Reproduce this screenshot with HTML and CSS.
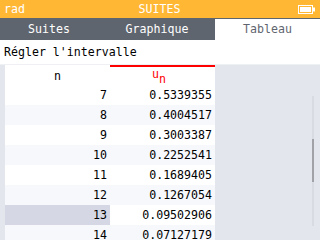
FILE: index.html
```html
<!DOCTYPE html>
<html lang="fr">
<head>
<meta charset="utf-8">
<link rel="stylesheet" href="styles.css">
</head>
<body>
<div class="screen">
  <header class="status">
    <span class="angle">rad</span>
    <span class="title">SUITES</span>
    <span class="battery">
      <svg width="17" height="9" viewBox="0 0 17 9">
        <rect x="0.5" y="0.5" width="14" height="8" fill="none" stroke="#fff" stroke-width="1"/>
        <rect x="2" y="2" width="11" height="5" fill="#fff"/>
        <rect x="15" y="2.5" width="2" height="4" fill="#fff"/>
      </svg>
    </span>
  </header>
  <nav class="tabs">
    <div class="tab">Suites</div>
    <div class="tab">Graphique</div>
    <div class="tab active">Tableau</div>
  </nav>
  <div class="action">Régler l'intervalle</div>
  <main class="content">
    <div class="table">
      <div class="cell head">n</div>
      <div class="cell head u">u<sub>n</sub></div>

      <div class="cell n">7</div><div class="cell v">0.5339355</div>
      <div class="cell n alt">8</div><div class="cell v alt">0.4004517</div>
      <div class="cell n">9</div><div class="cell v">0.3003387</div>
      <div class="cell n alt">10</div><div class="cell v alt">0.2252541</div>
      <div class="cell n">11</div><div class="cell v">0.1689405</div>
      <div class="cell n alt">12</div><div class="cell v alt">0.1267054</div>
      <div class="cell n sel">13</div><div class="cell v">0.09502906</div>
      <div class="cell n alt">14</div><div class="cell v alt">0.07127179</div>
    </div>
    <div class="side">
      <div class="track"><div class="thumb"></div></div>
    </div>
  </main>
</div>
</body>
</html>
```

FILE: styles.css
```css
* { box-sizing: border-box; }
html, body { margin: 0; padding: 0; }
body {
  width: 320px;
  height: 240px;
  overflow: hidden;
  background: #fff;
  font-family: "DejaVu Sans Mono", "Liberation Mono", monospace;
  font-size: 11.6px;
  color: #000;
}
.screen {
  width: 320px;
  height: 240px;
  display: flex;
  flex-direction: column;
  overflow: hidden;
}
.status {
  height: 18px;
  flex: none;
  background: #ffb734;
  color: #fff;
  display: grid;
  grid-template-columns: 1fr auto 1fr;
  align-items: center;
  padding: 0 5px 0 4px;
  line-height: 18px;
}
.title { text-align: center; }
.battery { justify-self: end; display: flex; }
.battery svg { display: block; }
.tabs {
  height: 22px;
  flex: none;
  background: #5f656f;
  display: grid;
  grid-template-columns: 107px 108px 105px;
  border-top: 1px solid #5f656f;
}
.tab {
  color: #fff;
  text-align: center;
  line-height: 21px;
}
.tab:first-child { padding-right: 9px; }
.tab:nth-child(2) { padding-right: 8px; }
.tab.active {
  background: #fff;
  color: #5f656f;
}
.action {
  height: 25px;
  flex: none;
  padding-left: 4px;
  line-height: 25px;
  border-bottom: 1px solid #eef0f4;
}
.content {
  flex: 1;
  display: flex;
  min-height: 0;
}
.table {
  width: 215px;
  flex: none;
  background: #e4e6ee;
  padding-left: 5px;
  display: grid;
  grid-template-columns: 105px 105px;
  grid-auto-rows: 20px;
  align-content: start;
}
.cell {
  background: #fff;
  line-height: 20px;
  text-align: right;
  padding-right: 3px;
  white-space: nowrap;
}
.cell.alt { background: #f6f8fc; }
.cell.sel { background: #d5d8e4; }
.cell.head {
  height: 21px;
  text-align: center;
  padding-right: 0;
  padding-left: 0;
  line-height: 20px;
}
.table .cell.head:first-child { padding-top: 1px; }
.cell.head.u {
  border-top: 2px solid #ff0000;
  color: #ff0000;
  text-align: left;
  padding-left: 42px;
  line-height: 14px;
  padding-top: 0;
}
.cell.head.u sub {
  font-size: 11.6px;
  vertical-align: -5px;
  line-height: 0;
}
.table .cell.head { margin-bottom: -1px; }
.side {
  flex: 1;
  background: #e4e6ee;
  display: flex;
  justify-content: flex-end;
  padding: 31px 6px 0 0;
}
.track {
  width: 2px;
  height: 130px;
  background: #d9dbe3;
}
.thumb {
  margin-top: 43px;
  width: 2px;
  height: 43px;
  background: #a0a2a8;
}
```
